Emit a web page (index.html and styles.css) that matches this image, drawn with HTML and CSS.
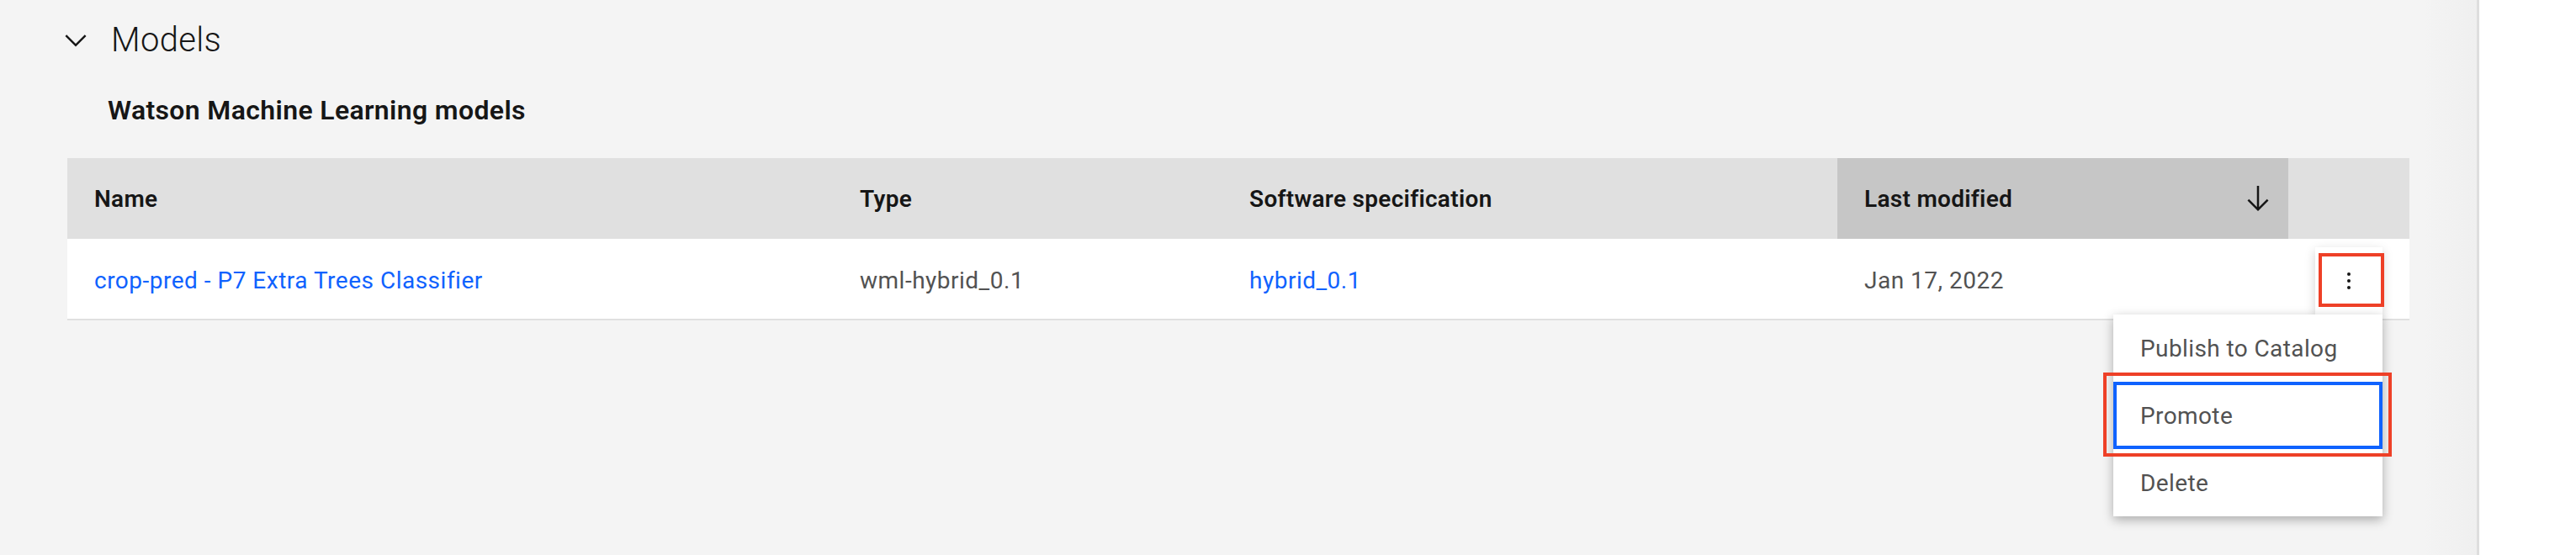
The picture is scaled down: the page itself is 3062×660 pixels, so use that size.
FILE: index.html
```html
<!DOCTYPE html>
<html lang="en">
<head>
<meta charset="utf-8">
<title>Models</title>
<link rel="stylesheet" href="styles.css">
</head>
<body>
<div class="page">
  <main class="panel">
    <section class="section">
      <header class="section-head">
        <svg class="chevron" viewBox="0 0 32 32" width="40" height="40" aria-hidden="true"><path d="M16 22L6 12 7.4 10.6 16 19.2 24.6 10.6 26 12z"/></svg>
        <h2 class="section-title">Models</h2>
      </header>
      <h3 class="subhead">Watson Machine Learning models</h3>
      <table class="table">
        <colgroup>
          <col class="w-name"><col class="w-type"><col class="w-spec"><col class="w-mod"><col class="w-act">
        </colgroup>
        <thead>
          <tr>
            <th>Name</th>
            <th>Type</th>
            <th>Software specification</th>
            <th class="sorted"><div class="th-inner"><span>Last modified</span><svg class="sort-icon" viewBox="0 0 32 32" width="40" height="40" aria-hidden="true"><path d="M24.59 16.59L17 24.17 17 4 15 4 15 24.17 7.41 16.59 6 18 16 28 26 18 24.59 16.59z"/></svg></div></th>
            <th class="act"></th>
          </tr>
        </thead>
        <tbody>
          <tr>
            <td><a class="link" href="#">crop-pred - P7 Extra Trees Classifier</a></td>
            <td>wml-hybrid_0.1</td>
            <td><a class="link" href="#">hybrid_0.1</a></td>
            <td>Jan 17, 2022</td>
            <td class="act">
              <div class="overflow">
                <button class="overflow-btn" type="button" aria-label="Options">
                  <svg viewBox="0 0 32 32" width="32" height="32" aria-hidden="true"><circle cx="16" cy="8" r="2"/><circle cx="16" cy="16" r="2"/><circle cx="16" cy="24" r="2"/></svg>
                </button>
                <span class="annot annot-btn"></span>
                <ul class="menu">
                  <li class="menu-item">Publish to Catalog</li>
                  <li class="menu-item focused">Promote<span class="annot annot-item"></span></li>
                  <li class="menu-item">Delete</li>
                </ul>
              </div>
            </td>
          </tr>
        </tbody>
      </table>
    </section>
  </main>
  <aside class="side"></aside>
</div>
</body>
</html>
```

FILE: styles.css
```css
* { box-sizing: border-box; }
html, body { margin: 0; padding: 0; }
body {
  font-family: Roboto, "Liberation Sans", Arial, sans-serif;
  background: #ffffff;
  color: #161616;
  width: 3062px;
  height: 660px;
  overflow: hidden;
}
.page {
  display: flex;
  height: 660px;
}
.panel {
  flex: 0 0 2947px;
  background: linear-gradient(to right, #f4f4f4 0, #f4f4f4 2880px, #efefef 100%);
  border-right: 3px solid #dedede;
  padding: 24px 80px 0 0;
}
.side {
  flex: 1;
  background: #ffffff;
}
.section-head {
  display: flex;
  align-items: center;
  gap: 22px;
  padding-left: 70px;
  height: 48px;
}
.chevron { fill: #161616; flex: none; }
.section-title {
  margin: 0;
  font-size: 40px;
  line-height: 48px;
  font-weight: 300;
  letter-spacing: 0.3px;
  color: #161616;
}
.subhead {
  margin: 39px 0 0 128px;
  font-size: 32px;
  line-height: 40px;
  font-weight: 600;
  letter-spacing: 0.35px;
  color: #161616;
}
.table {
  margin: 37px 0 0 80px;
  width: 2784px;
  border-collapse: collapse;
  table-layout: fixed;
}
.w-name { width: 910px; }
.w-type { width: 463px; }
.w-spec { width: 731px; }
.w-mod { width: 536px; }
.w-act { width: 144px; }
.table th {
  height: 96px;
  padding: 0 32px;
  background: #e0e0e0;
  text-align: left;
  font-size: 28px;
  font-weight: 600;
  letter-spacing: 0.3px;
  color: #161616;
  vertical-align: middle;
}
.table th.sorted {
  background: #c6c6c6;
  padding-right: 16px;
}
.th-inner {
  display: flex;
  align-items: center;
  justify-content: space-between;
}
.sort-icon { fill: #161616; flex: none; }
.table td {
  height: 96px;
  padding: 4px 32px 0;
  background: #ffffff;
  border-bottom: 2px solid #e0e0e0;
  font-size: 28px;
  letter-spacing: 0.5px;
  color: #525252;
  vertical-align: middle;
  white-space: nowrap;
}
.table td.act {
  padding: 0;
  vertical-align: top;
}
.link {
  color: #0f62fe;
  text-decoration: none;
}
.overflow {
  position: relative;
  width: 80px;
  height: 80px;
  margin: 10px 0 0 32px;
}
.overflow-btn {
  display: flex;
  align-items: center;
  justify-content: center;
  width: 80px;
  height: 80px;
  padding: 0;
  border: 0;
  background: #ffffff;
  box-shadow: 0 4px 12px rgba(0, 0, 0, 0.18);
  fill: #161616;
}
.annot {
  position: absolute;
  border: 4px solid #ee4027;
  pointer-events: none;
}
.annot-btn {
  left: 4px;
  right: -2px;
  top: 7px;
  bottom: 9px;
  z-index: 3;
}
.menu {
  position: absolute;
  top: 100%;
  right: 0;
  width: 320px;
  margin: 0;
  padding: 0;
  list-style: none;
  background: #ffffff;
  box-shadow: 0 4px 12px rgba(0, 0, 0, 0.3);
  z-index: 2;
}
.menu-item {
  position: relative;
  display: flex;
  align-items: center;
  height: 80px;
  padding: 0 32px;
  font-size: 28px;
  letter-spacing: 0.4px;
  color: #525252;
}
.menu-item.focused {
  box-shadow: inset 0 0 0 4px #0f62fe;
}
.annot-item {
  left: -12px;
  right: -11px;
  top: -11px;
  bottom: -9px;
}
```
